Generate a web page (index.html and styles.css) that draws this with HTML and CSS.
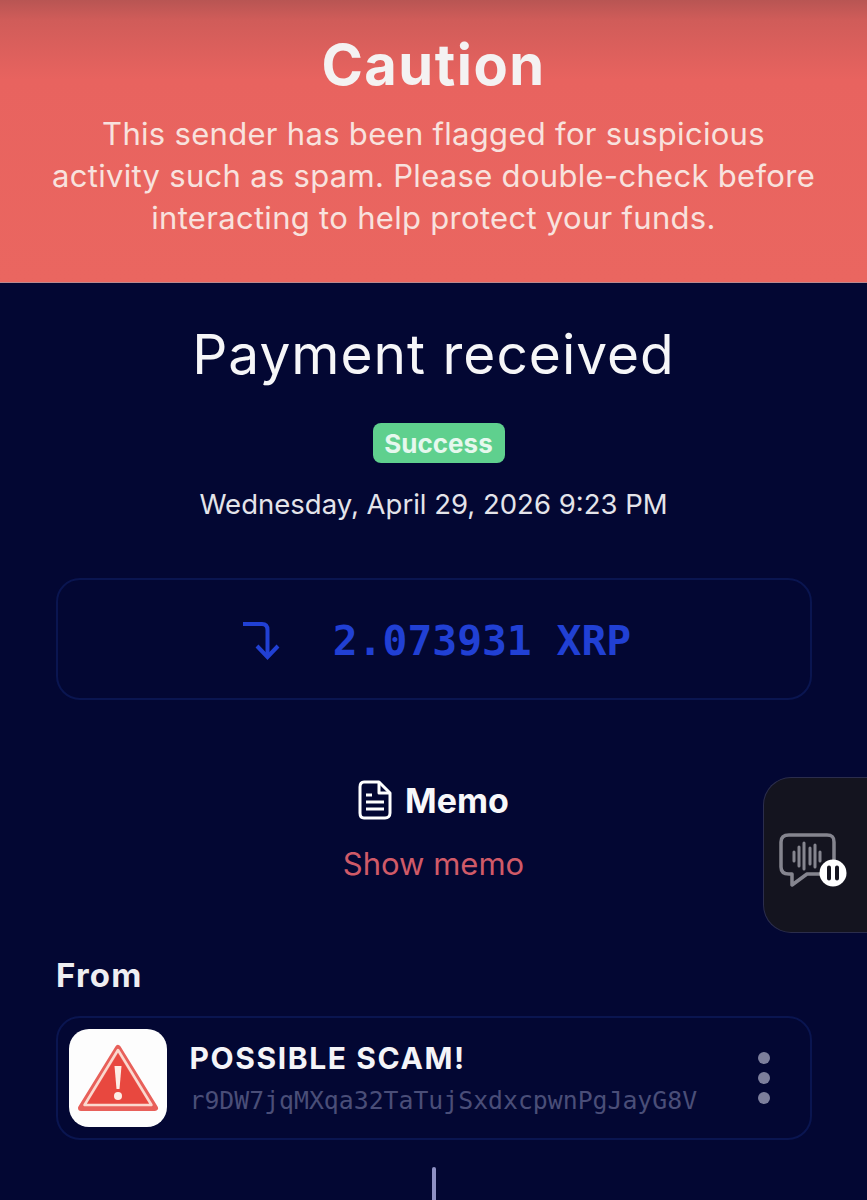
FILE: index.html
```html
<!DOCTYPE HTML>
<html lang="en-US">
<head>
	<meta charset="UTF-8" />
	<title>Payment received</title>
	<link rel="stylesheet" href="styles.css">
</head>
<body>
	<div class="banner">
		<h1 class="bannerTitle">Caution</h1>
		<p class="bannerText">This sender has been flagged for suspicious<br>activity such as spam. Please double-check before<br>interacting to help protect your funds.</p>
	</div>

	<div class="content">
		<h2 class="title">Payment received</h2>
		<span class="badge">Success</span>
		<p class="date">Wednesday, April 29, 2026 9:23 PM</p>

		<div class="amountBox">
			<svg class="amountIcon" width="40" height="40" viewBox="0 0 40 40" fill="none" stroke="#2140d4" stroke-width="4">
				<path d="M1 3H20C24 3 25.500 5 25.500 9V36" />
				<path d="M15 25L25.500 36L36 25" />
			</svg>
			<span class="amount">2.073931 XRP</span>
		</div>

		<div class="memoHead">
			<svg width="34" height="40" viewBox="0 0 34 40" fill="none" stroke="#fff" stroke-width="3">
				<path d="M6 2H21L32 13V33C32 36 30 38 27 38H6C3.500 38 2 36 2 33V7C2 4 3.500 2 6 2Z" stroke-linejoin="round" />
				<path d="M21 2V13H32" stroke-linejoin="round" />
				<path d="M8 15H14M8 22H26M8 29H26" />
			</svg>
			<span>Memo</span>
		</div>
		<a class="memoLink">Show memo</a>

		<div class="fromLabel">From</div>
		<div class="senderCard">
			<div class="avatar">
				<svg width="82" height="68" viewBox="0 0 82 68">
					<path d="M41 4L78 64H4Z" fill="#e8483f" stroke="#e8605a" stroke-width="6" stroke-linejoin="round" />
					<path d="M41 6L74.500 61H7.500Z" fill="none" stroke="#fbd9cf" stroke-width="2.500" stroke-linejoin="round" />
					<path d="M37.500 22H44.500L42.500 45H39.500Z" fill="#fdeee6" />
					<circle cx="41" cy="52" r="4" fill="#fdeee6" />
				</svg>
			</div>
			<div class="senderInfo">
				<div class="senderName">POSSIBLE SCAM!</div>
				<div class="senderAddress">r9DW7jqMXqa32TaTujSxdxcpwnPgJayG8V</div>
			</div>
			<div class="dots"><i></i><i></i><i></i></div>
		</div>
		<div class="connector"></div>
	</div>

	<div class="floatWidget">
		<svg width="68" height="56" viewBox="0 0 68 56" fill="none">
			<path d="M10 2H48C53 2 55 4 55 9V34C55 39 53 41 48 41H28L13 52V41H10C5 41 2 39 2 34V9C2 4 5 2 10 2Z" stroke="#85858f" stroke-width="3.500" stroke-linejoin="round" />
			<path d="M15 19V28M20 14V33M25 10V36M31 15V31M36 12V34M41 19V28" stroke="#85858f" stroke-width="3" stroke-linecap="round" />
			<circle cx="54" cy="40" r="13.500" fill="#fff" />
			<path d="M50 34.500V45.500M58 34.500V45.500" stroke="#14141f" stroke-width="4" stroke-linecap="round" />
		</svg>
	</div>
</body>
</html>
```

FILE: styles.css
```css
html, body {
	margin: 0;
	padding: 0;
}
body {
	position: relative;
	height: 1200px;
	overflow: hidden;
	background: #030733;
	color: #fff;
	font-family: 'Inter', 'Liberation Sans', sans-serif;
}

/* top warning */
.banner {
	height: 283px;
	box-sizing: border-box;
	padding-top: 30px;
	text-align: center;
	background: linear-gradient(to bottom, #b85553 0, #d05c59 20px, #e8635f 80px, #ea6660 100%);
	border-bottom: 1px solid #b9888f;
}
.bannerTitle {
	margin: 0;
	font-size: 56px;
	line-height: 70px;
	font-weight: 700;
	letter-spacing: 1.5px;
	color: #f4f2f2;
}
.bannerText {
	margin: 13px 0 0;
	font-size: 31px;
	line-height: 42px;
	letter-spacing: 0.3px;
	color: #f8e2de;
}

/* main column */
.content {
	display: flex;
	flex-direction: column;
	align-items: center;
	padding: 0 56px;
}
.title {
	margin: 36px 0 0;
	font-size: 55px;
	line-height: 70px;
	font-weight: 400;
	letter-spacing: 1px;
	color: #f6f6f8;
}
.badge {
	margin: 34px 0 0 10px;
	width: 132px;
	height: 40px;
	line-height: 41px;
	text-align: center;
	border-radius: 8px;
	background: #5fd08e;
	color: #e6f8ee;
	font-size: 26px;
	font-weight: 700;
}
.date {
	margin: 24px 0 0;
	font-size: 27.500px;
	line-height: 34px;
	color: #e4e4ea;
}
.amountBox {
	margin-top: 57px;
	width: 756px;
	height: 122px;
	box-sizing: border-box;
	display: flex;
	align-items: center;
	justify-content: center;
	gap: 51px;
	padding: 3px 0 0 10px;
	border: 2px solid #0a1550;
	border-radius: 24px;
}
.amountIcon {
	margin-left: -4px;
}
.amount {
	font-family: 'DejaVu Sans Mono', 'Liberation Mono', monospace;
	font-size: 41.300px;
	font-weight: 700;
	color: #2140d4;
}
.memoHead {
	margin-top: 78px;
	display: flex;
	align-items: center;
	gap: 13px;
	height: 44px;
	font-size: 34px;
	font-weight: 700;
	color: #f8f8fa;
}
.memoLink {
	margin-top: 22px;
	font-size: 31px;
	line-height: 40px;
	color: #d05a68;
}
.fromLabel {
	align-self: flex-start;
	margin-top: 71px;
	font-size: 33px;
	line-height: 40px;
	font-weight: 700;
	letter-spacing: 1.2px;
	color: #eeeef2;
}

/* sender */
.senderCard {
	margin-top: 21px;
	width: 756px;
	height: 124px;
	box-sizing: border-box;
	display: flex;
	align-items: center;
	padding: 0 40px 0 11px;
	border: 2px solid #0a1550;
	border-radius: 24px;
}
.avatar {
	width: 98px;
	height: 98px;
	flex: none;
	display: flex;
	align-items: center;
	justify-content: center;
	border-radius: 20px;
	background: #fdfdfd;
}
.senderInfo {
	flex: 1;
	margin-left: 23px;
}
.senderName {
	font-size: 30px;
	line-height: 36px;
	font-weight: 700;
	letter-spacing: 1.6px;
	color: #f4f4f8;
}
.senderAddress {
	margin-top: 9px;
	font-family: 'DejaVu Sans Mono', 'Liberation Mono', monospace;
	font-size: 24.800px;
	line-height: 32px;
	color: #4a4e78;
}
.dots {
	display: flex;
	flex-direction: column;
	gap: 8px;
}
.dots i {
	display: block;
	width: 12px;
	height: 12px;
	border-radius: 50%;
	background: #7d7f9c;
}
.connector {
	margin-top: 27px;
	width: 4px;
	height: 40px;
	border-radius: 2px;
	background: #8e90c4;
}

/* floating player on the right edge */
.floatWidget {
	position: absolute;
	left: 763px;
	top: 777px;
	width: 104px;
	height: 156px;
	box-sizing: border-box;
	display: flex;
	align-items: center;
	padding: 12px 0 0 15px;
	background: #14141f;
	border: 1px solid #2b2d4c;
	border-right: 0;
	border-radius: 28px 0 0 28px;
}
```
